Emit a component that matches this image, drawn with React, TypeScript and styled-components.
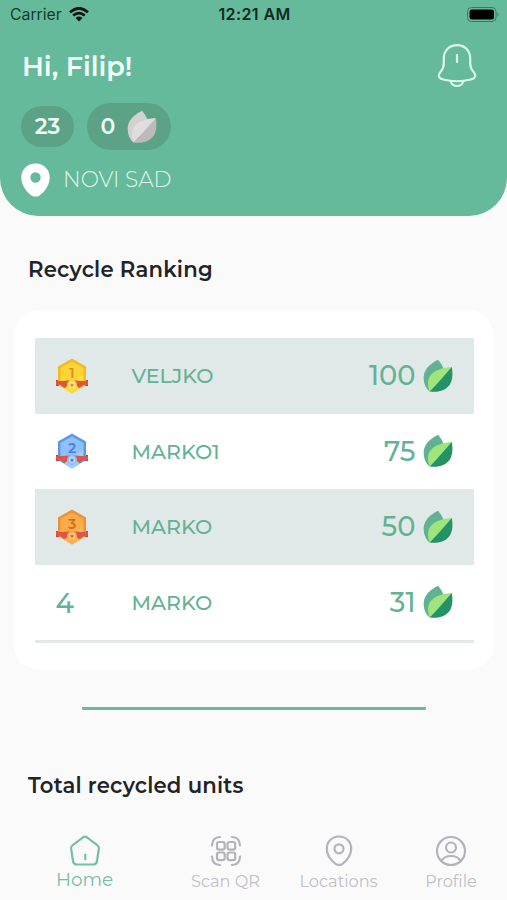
import React from "react";
import styled, { createGlobalStyle } from "styled-components";

const GlobalStyle = createGlobalStyle`
  * { box-sizing: border-box; }
  body { margin: 0; background: #fafafb; font-family: "Montserrat", "Inter", sans-serif; }
`;

const Screen = styled.main`
  width: 507px;
  height: 900px;
  overflow: hidden;
  display: flex;
  flex-direction: column;
  background: #fafafb;
`;

const Label = styled.span<{ $size: number; $weight?: number; $spacing?: number; $color?: string }>`
  font-size: ${(p) => p.$size}px;
  font-weight: ${(p) => p.$weight ?? 500};
  letter-spacing: ${(p) => p.$spacing ?? 0}px;
  color: ${(p) => p.$color ?? "#64b296"};
  line-height: 1.2;
  white-space: nowrap;
`;

const SystemLabel = styled(Label)`
  font-family: "Inter", sans-serif;
  padding-top: 1px;
`;

const RowLabel = styled(Label)`
  padding-top: 2px;
`;

const Header = styled.header`
  height: 216px;
  flex: none;
  background: #64ba9a;
  border-radius: 0 0 38px 38px;
`;

const StatusBar = styled.div`
  height: 29px;
  display: grid;
  grid-template-columns: 1fr auto 1fr;
  align-items: center;
  padding: 0 8px 0 10px;
`;

const Carrier = styled.div`
  display: flex;
  align-items: center;
  gap: 7px;
`;

const BatterySlot = styled.div`
  display: flex;
  justify-content: flex-end;
`;

const Greeting = styled.div`
  height: 74px;
  display: flex;
  align-items: center;
  justify-content: space-between;
  padding: 0 30px 0 22px;
`;

const Pills = styled.div`
  height: 47px;
  display: flex;
  align-items: center;
  gap: 13px;
  padding-left: 21px;
`;

const Pill = styled.div<{ $width: number; $height: number }>`
  width: ${(p) => p.$width}px;
  height: ${(p) => p.$height}px;
  display: flex;
  align-items: center;
  justify-content: center;
  gap: 12px;
  border-radius: 24px;
  background: #5ba286;
`;

const City = styled.div`
  height: 59px;
  display: flex;
  align-items: center;
  gap: 13px;
  padding-left: 21px;
`;

const SectionTitle = styled.h2<{ $top: number }>`
  margin: ${(p) => p.$top}px 0 0 28px;
  height: 28px;
  flex: none;
  line-height: 29px;
  font-size: 21.2px;
  font-weight: 600;
  letter-spacing: 0.2px;
  color: #232326;
`;

const Card = styled.section`
  margin: 27px 13px 0 14px;
  height: 360px;
  flex: none;
  padding: 28px 20.5px 0;
  border-radius: 25px;
  background: #fff;
`;

const Ranking = styled.ol`
  list-style: none;
  margin: 0;
  padding: 0;
  border-bottom: 3.5px solid #e2e8e8;
`;

const Row = styled.li<{ $shaded: boolean }>`
  height: 75.5px;
  display: grid;
  grid-template-columns: 76px 1fr auto 37px;
  align-items: center;
  padding: 0 21px;
  background: ${(p) => (p.$shaded ? "#e1e9e8" : "#fff")};
`;

const LeafSlot = styled.div`
  display: flex;
  justify-content: flex-end;
`;

const Divider = styled.hr`
  width: 344px;
  height: 3px;
  flex: none;
  margin: 37px 0 0 82px;
  border: 0;
  border-radius: 1px;
  background: #72b49d;
`;

const TabBar = styled.nav`
  height: 68px;
  margin-top: 32px;
  display: grid;
  grid-template-columns: 169px 113px 113px 112px;
`;

const Tab = styled.a<{ $active?: boolean }>`
  display: flex;
  flex-direction: column;
  align-items: center;
  gap: ${(p) => (p.$active ? 1 : 4)}px;
  padding-top: 3px;
  color: ${(p) => (p.$active ? "#76bfa4" : "#b3b3bb")};
`;

const Wifi = () => (
  <svg width="20" height="15" viewBox="0 0 20 15" fill="none" stroke="#07130f" strokeWidth="2.7">
    <path d="M1 5.2Q10-2.7 19 5.2M4.2 8.6q5.8-5 11.6 0" />
    <path d="M6.7 11q3.3-2.8 6.6 0L10 14.5Z" fill="#07130f" stroke="none" />
  </svg>
);

const Battery = () => (
  <svg width="34" height="16" viewBox="0 0 34 16">
    <rect x="2.5" y=".5" width="28.500" height="14" rx="4" fill="none" stroke="#3c7861" />
    <rect x="4.500" y="2.500" width="24.500" height="10" rx="2.500" fill="#000" />
    <path d="M32.500 5.500q2 2 0 4.500Z" fill="#3c7861" />
  </svg>
);

const Bell = () => (
  <svg width="40" height="46" viewBox="0 0 40 46" fill="none" stroke="#dcf8ea" strokeWidth="2.2" strokeLinecap="round" strokeLinejoin="round">
    <path d="M20 2.2C12 2.2 6.8 8 6.8 15.5v5.2c0 3.7-1.4 6-3.6 8.700-2.800 3.600-1 6.100 3 7.100 9 2.300 18.600 2.300 27.600 0 4-1 5.800-3.500 3-7.100-2.200-2.700-3.600-5-3.600-8.700v-5.200C33.200 8 28 2.200 20 2.200Z" />
    <path d="M20 12v7M13.800 38.500c1.800 6 10.600 6 12.400 0" />
  </svg>
);

const SolidPin = () => (
  <svg width="29" height="34" viewBox="0 0 29 34">
    <path fill="#fff" fillRule="evenodd" d="M14.500.5C6.600.5.300 6.500.300 14.300c0 7.400 4.500 14.600 10.600 18.400 2.200 1.200 5 1.200 7.200 0 6.100-3.800 10.600-11 10.600-18.400C28.700 6.500 22.400.5 14.500.5Zm0 8.800a5.200 5.200 0 1 1 0 10.400 5.200 5.200 0 0 1 0-10.400Z" />
  </svg>
);

const Leaf = ({ muted = false }: { muted?: boolean }) => (
  <svg width="30" height="34" viewBox="0 0 30 34">
    <path fill={muted ? "#d2d0d1" : "#61b294"} d="M15 .8C7.500 4.500 1 10.300.7 17.700.5 24 2.500 29.300 6.600 32.400L21 10.500Q19 5 15 .8Z" />
    <path fill={muted ? "#dfdddd" : "#a0e57b"} d="M28.800 7.900C20.500 8.400 12.500 10.500 8 15.800c-4.300 5.200-3.200 11.600-1.400 16.600L27.500 12Z" />
    <path fill={muted ? "#bcbaba" : "#239366"} d="M28.800 7.900C22 15.500 14.500 24.500 6.600 32.400c6.500 1.100 14 .2 18.600-4.800 4.700-5.200 4.800-12.400 3.600-19.700Z" />
  </svg>
);

const medals = [
  { edge: "#f2ba24", face: "#ffdb3b", ink: "#de8b20", bead: "#ffd84a" },
  { edge: "#5b98e5", face: "#9dccff", ink: "#4e7de0", bead: "#8fc3f4" },
  { edge: "#eb9137", face: "#ffb34d", ink: "#cd6d25", bead: "#ffad50" },
];

const MedalText = styled.text`
  font-family: "Montserrat", "Inter", sans-serif;
  font-size: 14px;
  font-weight: 600;
`;

const Medal = ({ rank }: { rank: number }) => {
  const c = medals[rank - 1];
  return (
    <svg width="32" height="36" viewBox="1 0 32 36">
      <path d="M1 22h32v6H1Z" fill="#bd4141" />
      <path d="M17 .5 31 8.500v18.500L17 35.500 3 27V8.500Z" fill={c.edge} />
      <path d="M17 3.500 28.500 10v15.500L17 32 5.500 25.500V10Z" fill={c.face} />
      <path d="M17 3.500 28.500 10v7L9 27.500l-3.500-2V10Z" fill={c.edge} opacity=".22" />
      <path d="M1 22.500c3 1 8 .5 11.500 0h9c3.500.5 8.500 1 11.500 0v4.300H29l-6 4h-12l-6-4H1Z" fill="#de5545" />
      <path d="M9 30.800 17 24l8 6.800-8 4.700Z" fill={c.face} />
      <circle cx="17" cy="27" r="4.900" fill={c.bead} />
      <circle cx="17" cy="27" r="3.200" fill="#fff" opacity=".35" />
      <path d="m17 25 .7 1.300 1.400.2-1 1 .2 1.400-1.300-.7-1.300.7.200-1.400-1-1 1.400-.2Z" fill={c.ink} />
      <MedalText x="17" y="20" textAnchor="middle" fill={c.ink}>{rank}</MedalText>
    </svg>
  );
};

const lineProps = { width: 34, height: 34, viewBox: "0 0 34 34", fill: "none", stroke: "currentColor", strokeWidth: 2.2, strokeLinecap: "round", strokeLinejoin: "round" } as const;

const HomeIcon = () => (
  <svg {...lineProps}>
    <path d="M15 3.300q2-1.200 4 0l10.500 8q1.700 1.300 1.400 3.200L29 27q-.5 3.500-3.800 3.500H8.800Q5.500 30.500 5 27L3.100 14.500Q2.800 12.600 4.500 11.300Z" />
    <path d="M17.300 20.500v4.800" />
  </svg>
);

const QrIcon = () => (
  <svg {...lineProps}>
    <path d="M3 11.500c.2-5 2.700-8.300 8-8.500M23 3c5.300.2 7.800 3.500 8 8.500M3 22.500c.2 5 2.700 8.300 8 8.500M23 31c5.300-.2 7.800-3.500 8-8.500" />
    <rect x="8" y="8" width="7.700" height="7.700" rx="2.200" />
    <rect x="18.500" y="8" width="7.700" height="7.700" rx="2.200" />
    <rect x="8" y="18.500" width="7.700" height="7.700" rx="2.200" />
    <rect x="18.500" y="18.500" width="7.700" height="7.700" rx="2.200" />
  </svg>
);

const PinIcon = () => (
  <svg {...lineProps}>
    <path d="M17 2.500c-7.200 0-12.200 5.200-12.200 12.100 0 6.200 3.700 11.500 8.700 15.200q3.500 2.300 7 0c5-3.700 8.700-9 8.700-15.200C29.200 7.700 24.200 2.500 17 2.500Z" />
    <circle cx="17" cy="14.800" r="4.500" />
  </svg>
);

const ProfileIcon = () => (
  <svg {...lineProps}>
    <circle cx="17" cy="17" r="14" />
    <circle cx="17" cy="13.500" r="5" />
    <path d="M7.500 27c3.500-6.700 15.500-6.700 19 0" />
  </svg>
);

const players = [
  { rank: 1, name: "VELJKO", score: 100 },
  { rank: 2, name: "MARKO1", score: 75 },
  { rank: 3, name: "MARKO", score: 50 },
  { rank: 4, name: "MARKO", score: 31 },
];

export default function App() {
  return (
    <Screen>
      <GlobalStyle />
      <Header>
        <StatusBar>
          <Carrier>
            <SystemLabel $size={15.8} $weight={400} $color="#173a2e">Carrier</SystemLabel>
            <Wifi />
          </Carrier>
          <SystemLabel $size={16} $weight={600} $spacing={0.4} $color="#102a21">12:21 AM</SystemLabel>
          <BatterySlot><Battery /></BatterySlot>
        </StatusBar>
        <Greeting>
          <RowLabel $size={27} $weight={600} $color="#f4fffa">Hi, Filip!</RowLabel>
          <Bell />
        </Greeting>
        <Pills>
          <Pill $width={53} $height={41}><RowLabel $size={22} $weight={600} $color="#f0fff8">23</RowLabel></Pill>
          <Pill $width={84} $height={47}>
            <RowLabel $size={22} $weight={600} $color="#f0fff8">0</RowLabel>
            <Leaf muted />
          </Pill>
        </Pills>
        <City>
          <SolidPin />
          <Label $size={21.7} $weight={300} $color="#e0f8ed">NOVI SAD</Label>
        </City>
      </Header>
      <SectionTitle $top={39}>Recycle Ranking</SectionTitle>
      <Card>
        <Ranking>
          {players.map((p) => (
            <Row key={p.rank} $shaded={p.rank % 2 === 1}>
              {p.rank < 4 ? <Medal rank={p.rank} /> : <RowLabel $size={27.5}>{p.rank}</RowLabel>}
              <RowLabel $size={20.5}>{p.name}</RowLabel>
              <RowLabel $size={27.3}>{p.score}</RowLabel>
              <LeafSlot><Leaf /></LeafSlot>
            </Row>
          ))}
        </Ranking>
      </Card>
      <Divider />
      <SectionTitle $top={61}>Total recycled units</SectionTitle>
      <TabBar>
        <Tab $active><HomeIcon /><Label $size={18.4} $weight={400} $color="#76bfa4">Home</Label></Tab>
        <Tab><QrIcon /><Label $size={16.2} $weight={400} $color="#bfbfc7">Scan QR</Label></Tab>
        <Tab><PinIcon /><Label $size={16.2} $weight={400} $color="#bfbfc7">Locations</Label></Tab>
        <Tab><ProfileIcon /><Label $size={16.2} $weight={400} $color="#bfbfc7">Profile</Label></Tab>
      </TabBar>
    </Screen>
  );
}
